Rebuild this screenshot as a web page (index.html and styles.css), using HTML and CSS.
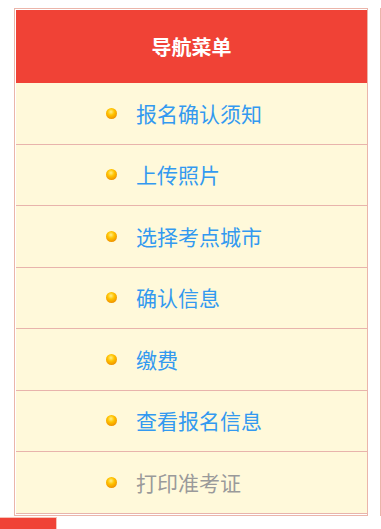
FILE: index.html
```html
<!DOCTYPE html>
<html lang="zh-CN">
<head>
<meta charset="utf-8">
<title>导航菜单</title>
<link rel="stylesheet" href="styles.css">
</head>
<body>
<div class="page">
  <div class="nav">
    <div class="nav-head">导航菜单</div>
    <ul class="nav-list">
      <li class="nav-item"><span class="ball"></span><a class="link" href="#">报名确认须知</a></li>
      <li class="nav-item"><span class="ball"></span><a class="link" href="#">上传照片</a></li>
      <li class="nav-item"><span class="ball"></span><a class="link" href="#">选择考点城市</a></li>
      <li class="nav-item"><span class="ball"></span><a class="link" href="#">确认信息</a></li>
      <li class="nav-item"><span class="ball"></span><a class="link" href="#">缴费</a></li>
      <li class="nav-item"><span class="ball"></span><a class="link" href="#">查看报名信息</a></li>
      <li class="nav-item"><span class="ball"></span><a class="link disabled" href="#">打印准考证</a></li>
    </ul>
  </div>
  <div class="side"></div>
</div>
<div class="foot-tab"></div>
</body>
</html>
```
FILE: styles.css
```css
html, body {
  margin: 0;
  padding: 0;
  background: #ffffff;
  font-family: "Noto Sans CJK SC", "Noto Sans", sans-serif;
}
.page {
  display: flex;
  align-items: stretch;
  padding-top: 8px;
}
.nav {
  margin-left: 14px;
  width: 352px;
  border: 1px solid #ebb5aa;
  padding: 1px 0 1px 1px;
  box-sizing: content-box;
}
.nav-head {
  height: 73px;
  background: #f04236;
  color: #ffffff;
  font-weight: bold;
  font-size: 20px;
  display: flex;
  align-items: center;
  justify-content: center;
}
.nav-list {
  list-style: none;
  margin: 0;
  padding: 0;
}
.nav-item {
  height: 60.5px;
  background: #fff9da;
  border-bottom: 1px solid #e8b4ac;
  display: flex;
  align-items: center;
  padding-left: 90px;
  gap: 19px;
}
.ball {
  width: 11px;
  height: 11px;
  border-radius: 50%;
  background: radial-gradient(circle at 45% 35%, #ffef8a 0%, #ffc400 35%, #f29a00 70%, #cf7400 100%);
  flex: none;
}
.link {
  color: #3399f0;
  font-size: 21px;
  text-decoration: none;
  line-height: 1;
}
.link.disabled {
  color: #9a9a9a;
}
.side {
  margin-left: 12px;
  flex: 1;
  border-left: 1px solid #ebb5aa;
}
.foot-tab {
  margin-top: 1px;
  width: 56px;
  height: 20px;
  background: #f04236;
  border-top: 1px solid #f6c3b8;
  border-right: 1px solid #f6c3b8;
}
```
